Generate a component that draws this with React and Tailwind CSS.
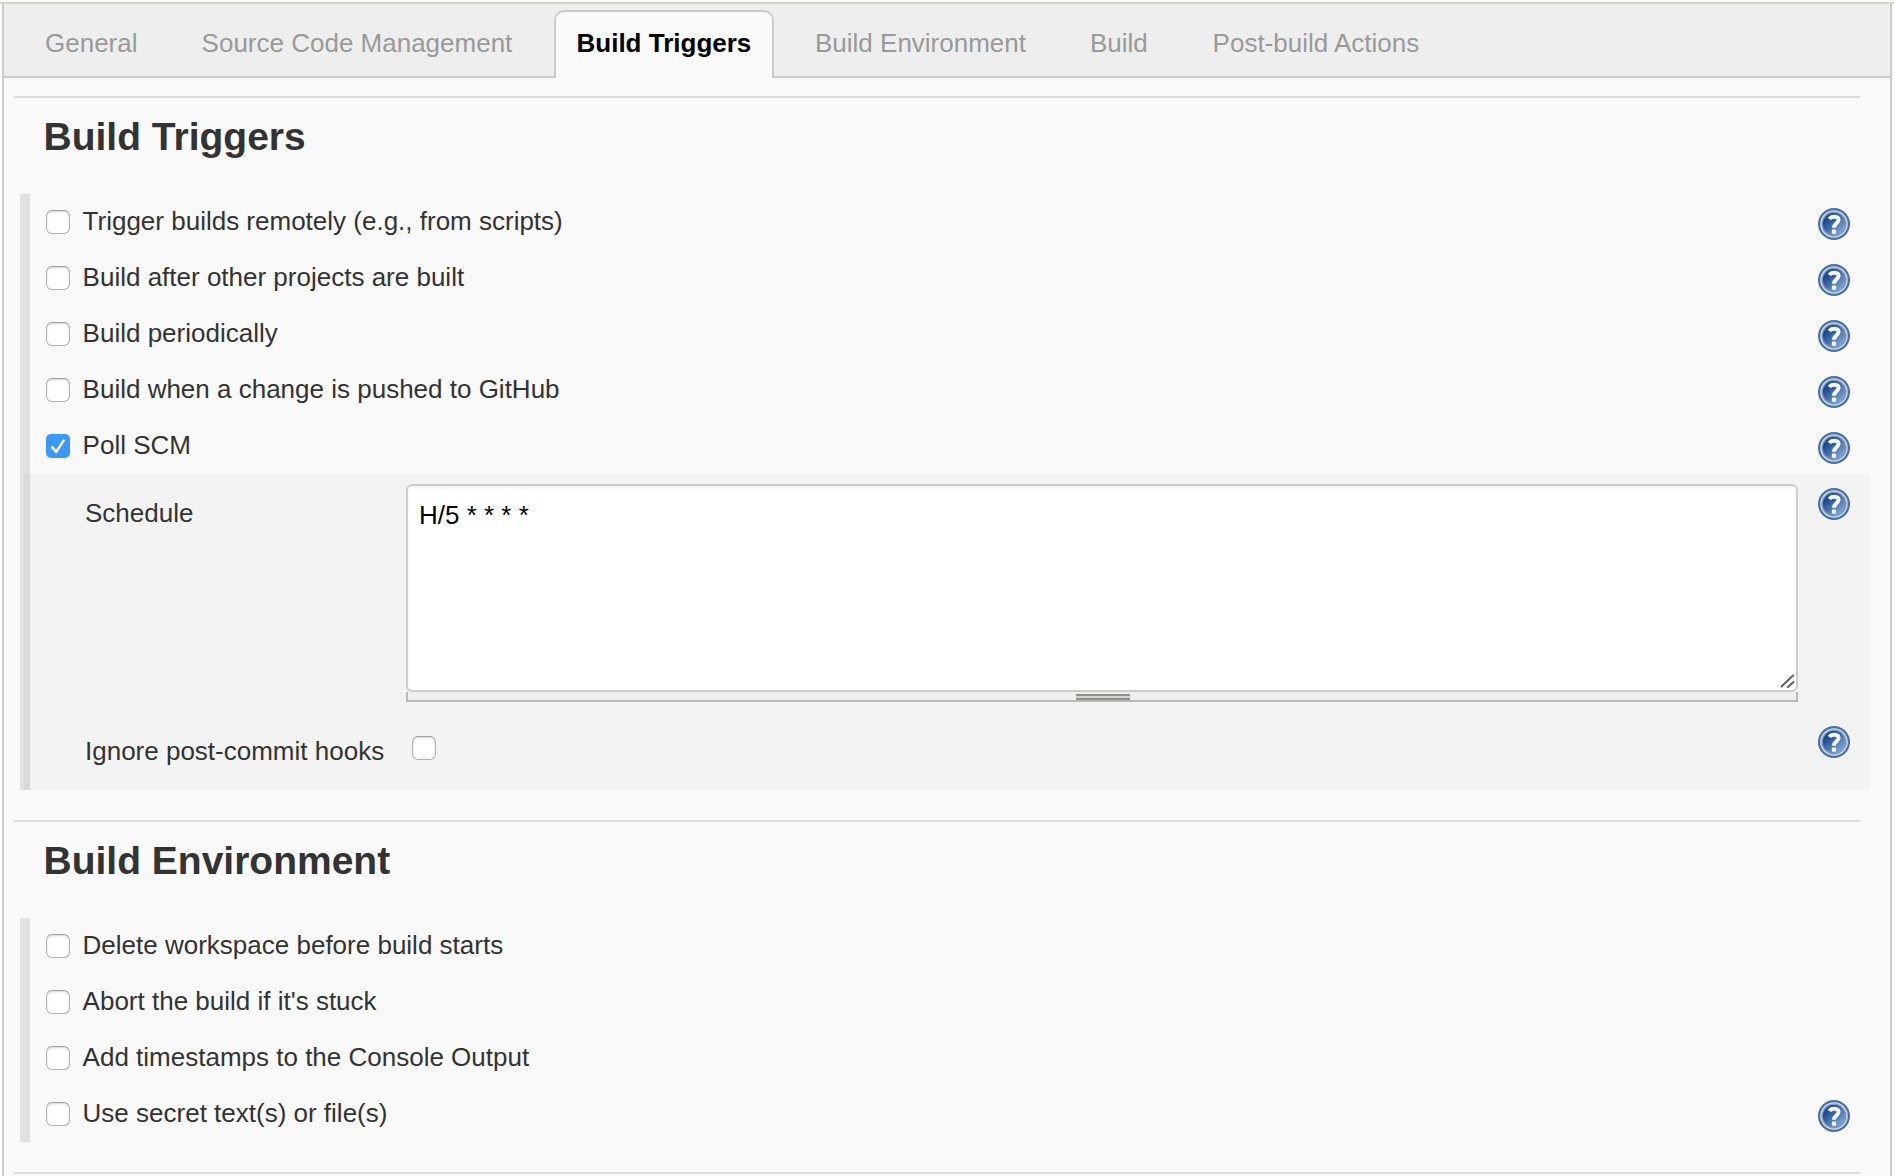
import React from "react";

function HelpIcon() {
  return (
    <svg viewBox="0 0 32 32" className="block h-8 w-8 shrink-0">
      <defs>
        <linearGradient id="help-fill" x1="0.1" y1="0.1" x2="0.9" y2="0.95">
          <stop offset="0.2" stopColor="#1f4a8c" />
          <stop offset="1" stopColor="#8fb2de" />
        </linearGradient>
      </defs>
      <circle cx="16" cy="16" r="14.9" fill="#cfdaeb" stroke="#4a6fa8" strokeWidth="2.2" />
      <circle cx="16" cy="16" r="11.8" fill="url(#help-fill)" stroke="#7b97c4" strokeWidth="1.4" />
      <path
        d="M11.4 11C13 8 20.6 7.4 20.6 12C20.6 15.4 16 15.4 16 19.8"
        fill="none"
        stroke="#f4f7fb"
        strokeWidth="4"
      />
      <rect x="13.9" y="21.6" width="4.2" height="4.2" rx="0.8" fill="#f4f7fb" />
    </svg>
  );
}

function Checkbox({ checked }) {
  if (checked) {
    return (
      <span role="checkbox" aria-checked="true" className="block h-6 w-6 shrink-0 rounded-[5px] bg-[#3b99fc]">
        <svg viewBox="0 0 24 24" className="block h-6 w-6">
          <path d="M6.2 13.2L10.2 18L17.6 6.6" fill="none" stroke="#fff" strokeWidth="2.5" strokeLinecap="round" strokeLinejoin="round" />
        </svg>
      </span>
    );
  }
  return (
    <span
      role="checkbox"
      aria-checked="false"
      className="block h-6 w-6 shrink-0 rounded-[6px] border border-[#b4b4b4] border-t-[#a0a0a0] bg-white shadow-[inset_0_1px_2px_rgba(0,0,0,0.18)]"
    />
  );
}

function Option({ label, checked, help }) {
  return (
    <div className="flex h-14 items-start pl-4">
      <div className="mt-4">
        <Checkbox checked={checked} />
      </div>
      <span className="mt-[11px] ml-[12.6px] flex-1 leading-[32px]">{label}</span>
      {help && (
        <div className="mt-[14px] mr-5">
          <HelpIcon />
        </div>
      )}
    </div>
  );
}

function Section({ title, children }) {
  return (
    <section>
      <div className="mr-[30px] ml-[10px] h-[2px] bg-[#dcdcdc]" />
      <h2 className="mt-[15px] mb-[33px] ml-[39.5px] text-[39px] leading-[48px] font-bold">{title}</h2>
      <div className="mr-5 ml-4 border-l-[10px] border-[#e0e0e0]">{children}</div>
    </section>
  );
}

const tab = "mt-[23px] leading-[32px] whitespace-nowrap text-[#999]";

export default function App() {
  return (
    <div className="flex h-[1176px] w-[1894px] flex-col overflow-hidden bg-[#fcfcfc] font-['Helvetica_Neue','Liberation_Sans',Arial,sans-serif] text-[26px] text-[#333]">
      <div className="h-1 shrink-0 border-b-2 border-[#d3d5cf] bg-[#f7f9ee]" />
      <main className="mr-[2px] ml-[2px] h-[1172px] border-x-2 border-[#ccc] bg-[#f9f9f9]">
        <nav className="flex h-[74px] items-stretch bg-[#eee]">
          <div className="flex w-[550px] border-b-2 border-[#ccc] pl-[41px]">
            <span className={tab + " w-[156.6px]"}>General</span>
            <span className={tab}>Source Code Management</span>
          </div>
          <div className="mt-[6px] w-[220px] rounded-t-[10px] border-2 border-b-0 border-[#ccc] bg-[#f9f9f9] pl-[20.5px]">
            <span className="mt-[15px] block leading-[32px] font-bold whitespace-nowrap text-black">Build Triggers</span>
          </div>
          <div className="flex flex-1 border-b-2 border-[#ccc] pl-[41px]">
            <span className={tab + " w-[275px]"}>Build Environment</span>
            <span className={tab + " w-[122.6px]"}>Build</span>
            <span className={tab}>Post-build Actions</span>
          </div>
        </nav>
        <div className="pt-[18px]">
          <Section title="Build Triggers">
            <Option label="Trigger builds remotely (e.g., from scripts)" help />
            <Option label="Build after other projects are built" help />
            <Option label="Build periodically" help />
            <Option label="Build when a change is pushed to GitHub" help />
            <Option label="Poll SCM" checked help />
            <div className="-ml-[6px] h-[316px] border-l-[6px] border-[#dadada] bg-[#f3f3f3] pt-[10px]">
              <div className="flex h-[218px] items-start">
                <span className="mt-[13px] w-[376px] pl-[55px] leading-[32px]">Schedule</span>
                <div className="w-[1392px]">
                  <div className="flex h-[208px] items-start justify-between rounded-[6px] border-2 border-[#ccc] bg-white pt-[13px] pl-[11px] text-black shadow-[inset_0_2px_3px_rgba(0,0,0,0.06)]">
                    <span className="leading-[32px]">H/5 * * * *</span>
                    <svg viewBox="0 0 16 16" className="mt-[173px] mr-[1px] h-4 w-4">
                      <path d="M2.5 14.5L14 3.5M9 15L14.5 10" stroke="#606060" strokeWidth="2" strokeLinecap="round" />
                    </svg>
                  </div>
                  <div className="flex h-[10px] justify-center border-2 border-t-0 border-[#b9bab2] bg-[#eee]">
                    <span className="mt-[2px] ml-[2px] h-[6px] w-[54px] border-y-2 border-[#8f8f8b] bg-[#d2d2d0]" />
                  </div>
                </div>
                <div className="mt-1 ml-5">
                  <HelpIcon />
                </div>
              </div>
              <div className="mt-[24px] flex items-start">
                <span className="mt-[9px] w-[382px] pl-[55px] leading-[32px]">Ignore post-commit hooks</span>
                <div className="mt-[10px]">
                  <Checkbox />
                </div>
                <div className="mr-5 ml-auto">
                  <HelpIcon />
                </div>
              </div>
            </div>
          </Section>
          <div className="h-[30px]" />
          <Section title="Build Environment">
            <Option label="Delete workspace before build starts" />
            <Option label="Abort the build if it's stuck" />
            <Option label="Add timestamps to the Console Output" />
            <Option label="Use secret text(s) or file(s)" help />
          </Section>
          <div className="mt-[30px] mr-[30px] ml-[10px] h-[2px] bg-[#dcdcdc]" />
        </div>
      </main>
    </div>
  );
}
